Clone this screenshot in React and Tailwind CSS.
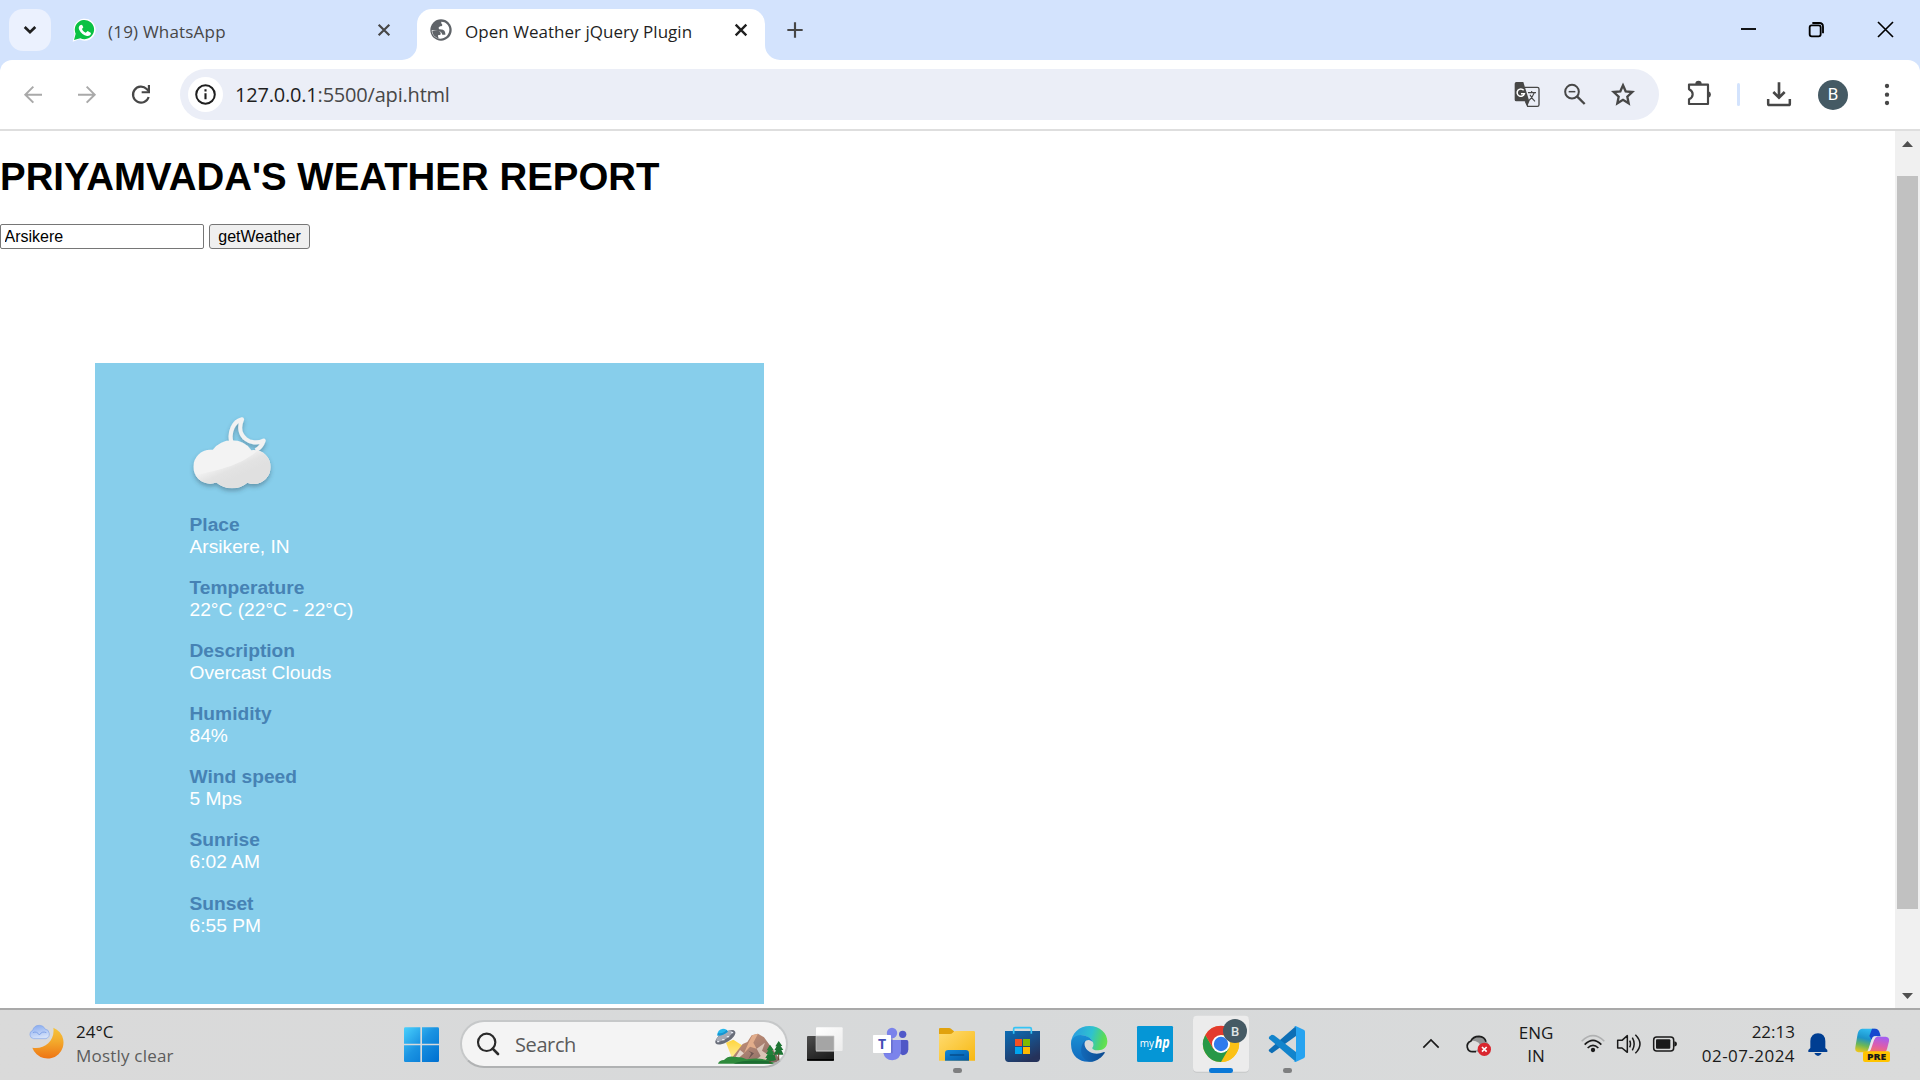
import React from "react";

const UI = "font-['Open_Sans']";

/* Icon whose drawing units are thirds of a pixel */
function Ico({ x, y = 30, w, h = 204, className = "", children }) {
  return (
    <svg
      viewBox={`${x} ${y} ${w} ${h}`}
      width={w / 3}
      height={h / 3}
      fill="none"
      className={`block shrink-0 ${className}`}
    >
      {children}
    </svg>
  );
}

function TabStrip() {
  return (
    <div className="flex h-[60px] shrink-0 items-start bg-[#d3e3fd]">
      <div className="mt-[9px] ml-[9px] flex size-[42px] shrink-0 items-center justify-center rounded-[14px] bg-[#ebf1fe]">
        <svg width="14" height="10" viewBox="0 0 14 10" fill="none">
          <path d="M1.7 2 7 7.2 12.3 2" stroke="#1f1f1f" strokeWidth="2.7" />
        </svg>
      </div>
      <Ico x={213} y={0} w={78} h={180} className="ml-[20px]">
        <path d="M218 125 224 103A33 33 0 1 1 238 118Z" fill="#fff" />
        <path d="M222 120 227 101A29 29 0 1 1 241 115Z" fill="#0ac143" />
        <path
          d="M240 76c-4 3-5 9-2 14 5 10 13 16 23 18 6 1 12-3 12-9l-10-6-6 5c-5-2-9-6-11-11l4-5-4-8z"
          fill="#fff"
        />
      </Ico>
      <div className={`${UI} mt-[19px] ml-[11px] w-[200px] text-[17px] leading-[25px] whitespace-nowrap text-[#474747]`}>
        <span className="tracking-[0.2px]">(19) WhatsApp</span>
      </div>
      <Ico x={1122} y={0} w={60} h={180} className="ml-[66px]">
        <path d="M1136 74 1168 106M1168 74 1136 106" stroke="#474747" strokeWidth="6.5" />
      </Ico>
      <svg width="15" height="60" className="ml-[8px] block shrink-0">
        <path d="M15 45A15 15 0 0 1 0 60H15Z" fill="#fff" />
      </svg>
      <div className="mt-[9px] flex h-[51px] w-[348px] shrink-0 rounded-t-[15px] bg-white">
        <Ico x={1284} y={27} w={78} h={153} className="ml-[11px]">
          <circle cx="1323" cy="90" r="32" fill="#5f6368" />
          <path
            d="M1297 91c9 1 16 2 20 3 7 1 8 5 10 10h9v-5c0-4 4-7 7-7h5c-2 13-13 24-27 24s-26-11-26-25Z"
            fill="#fff"
          />
          <path d="M1324 65c-2 6 3 6 3 10 0 5-11 3-11 9 0 7 13 3 17 8 3 4 2 9 8 9 4-3 8-8 7-14-1-12-11-22-24-22Z" fill="#fff" />
          <path d="M1297 93c13-3 24-2 25 7s-9 2-8 9l2 6c-11-3-19-11-19-22Z" fill="#5f6368" />
        </Ico>
        <div className={`${UI} mt-[10px] ml-[11px] w-[240px] text-[17px] leading-[25px] whitespace-nowrap text-[#1f1f1f]`}>
          <span className="tracking-[0.03px]">Open Weather jQuery Plugin</span>
        </div>
        <Ico x={2193} y={27} w={60} h={153} className="ml-[26px]">
          <path d="M2207 74 2239 106M2239 74 2207 106" stroke="#1f1f1f" strokeWidth="7" />
        </Ico>
      </div>
      <svg width="15" height="60" className="block shrink-0">
        <path d="M0 45A15 15 0 0 0 15 60H0Z" fill="#fff" />
      </svg>
      <Ico x={1155} y={0} w={60} h={180} className="ml-[5px]">
        <path d="M1162 90H1208M1185 67V113" stroke="#474747" strokeWidth="6.5" />
      </Ico>
      <Ico x={780} y={0} w={54} h={180} className="mr-[50px] ml-auto">
        <path d="M783 87H828" stroke="#000" strokeWidth="5.5" />
      </Ico>
      <Ico x={984} y={0} w={54} h={180} className="mr-[51px]">
        <rect x="989" y="76" width="33" height="33" rx="6" stroke="#000" strokeWidth="5.5" />
        <path d="M997 69H1018Q1029 69 1029 80V100" stroke="#000" strokeWidth="5.5" />
      </Ico>
      <Ico x={1191} y={0} w={54} h={180} className="mr-[25px]">
        <path d="M1194 66 1239 111M1239 66 1194 111" stroke="#000" strokeWidth="5" />
      </Ico>
    </div>
  );
}

function Toolbar() {
  return (
    <div className="h-[71px] shrink-0 bg-[#d3e3fd]">
      <div className="flex h-[71px] items-center rounded-t-[12px] border-b-2 border-[#dedede] bg-white">
        <Ico x={66} y={180} w={66} h={207} className="ml-[22px]">
          <path d="M126 284H78M100 260 76 284 100 308" stroke="#a9a9a9" strokeWidth="6" />
        </Ico>
        <Ico x={228} y={180} w={66} h={207} className="ml-[32px]">
          <path d="M234 284H282M260 260 284 284 260 308" stroke="#a9a9a9" strokeWidth="6" />
        </Ico>
        <Ico x={390} y={180} w={66} h={207} className="ml-[32px]">
          <path d="M446 291A24 24 0 1 1 440 267L446 273" stroke="#474747" strokeWidth="6.5" />
          <path d="M450 255V280H425V273.500H443.500V255Z" fill="#474747" />
        </Ico>
        <div className="ml-[28px] flex h-[51px] w-[1479px] shrink-0 items-center rounded-full bg-[#ebeef7]">
          <div className="ml-[8px] flex size-[35px] items-center justify-center rounded-full bg-white">
            <svg width="21" height="21" viewBox="0 0 21 21" fill="none">
              <circle cx="10.500" cy="10.500" r="9.300" stroke="#1f1f1f" strokeWidth="2" />
              <path d="M10.500 9.300V15.300M10.500 5.300V7.600" stroke="#1f1f1f" strokeWidth="2.100" />
            </svg>
          </div>
          <div className={`${UI} ml-[12px] w-[400px] text-[20px] leading-[28px] whitespace-nowrap text-[#474747]`}>
            <span className="tracking-[-0.2px]">
              <span className="text-[#1f1f1f]">127.0.0.1</span>:5500/api.html
            </span>
          </div>
          <Ico x={102} y={207} w={78} h={153} className="ml-auto">
            <path d="M135 262H172Q177 262 177 267V314Q177 319 172 319H143L136 304" stroke="#474747" strokeWidth="4" />
            <path d="M109 246H130L148 304 142 319 136 304H109Q104 304 104 299V251Q104 246 109 246Z" fill="#474747" />
            <path d="M131 271A11 11 0 1 0 133 281H123" stroke="#fff" strokeWidth="4.500" />
            <path d="M144 278H168M155 273V278M163 278Q157 294 146 302M150 284Q156 296 165 304" stroke="#474747" strokeWidth="3.500" />
          </Ico>
          <Ico x={249} y={207} w={72} h={153} className="ml-[23px]">
            <circle cx="276" cy="275" r="20.500" stroke="#474747" strokeWidth="6" />
            <path d="M291 289 314 312" stroke="#474747" strokeWidth="7" />
            <path d="M266 275H286" stroke="#474747" strokeWidth="4.500" />
          </Ico>
          <Ico x={390} y={207} w={78} h={153} className="mr-[23px] ml-[23px]">
            <path
              d="M429 256 437 274 457 276 442 290 446 310 429 299.500 412 310 416 290 401 276 421 274Z"
              stroke="#474747"
              strokeWidth="7"
            />
          </Ico>
        </div>
        <Ico x={618} y={180} w={84} h={207} className="ml-[27px]">
          <path d="M627 254H684V312H627V298Q638 293 638 283Q638 273 627 268Z" stroke="#474747" strokeWidth="6.500" strokeLinejoin="round" />
          <path d="M646 252A9.500 9.500 0 0 1 665 252ZM686 274A10 10 0 0 1 686 293Z" fill="#474747" />
        </Ico>
        <div className="ml-[23px] h-[23px] w-[3px] shrink-0 rounded-full bg-[#d3e3fd]" />
        <Ico x={855} y={180} w={84} h={207} className="ml-[25px]">
          <path d="M897 247V292M880 276 897 293 914 276" stroke="#474747" strokeWidth="8" />
          <path d="M864.500 297V311Q864.500 315 868 315H926Q929.500 315 929.500 311V297" stroke="#474747" strokeWidth="7.500" />
        </Ico>
        <div className="ml-[25px] flex size-[30px] shrink-0 items-center justify-center rounded-full bg-[#455a64] font-[Roboto] text-[17px] leading-none text-white">
          B
        </div>
        <Ico x={1203} y={180} w={36} h={207} className="ml-[33px]">
          <circle cx="1221" cy="258" r="6.500" fill="#474747" />
          <circle cx="1221" cy="284" r="6.500" fill="#474747" />
          <circle cx="1221" cy="309" r="6.500" fill="#474747" />
        </Ico>
      </div>
    </div>
  );
}

const REPORT = [
  ["Place", "Arsikere, IN"],
  ["Temperature", "22°C (22°C - 22°C)"],
  ["Description", "Overcast Clouds"],
  ["Humidity", "84%"],
  ["Wind speed", "5 Mps"],
  ["Sunrise", "6:02 AM"],
  ["Sunset", "6:55 PM"],
];

function CloudMoon() {
  return (
    <Ico x={327} y={186} w={270} h={270} className="overflow-visible">
      <defs>
        <clipPath id="cloud">
          <circle cx="391" cy="350" r="51" />
          <circle cx="456" cy="343" r="72" />
          <circle cx="521" cy="351" r="51" />
        </clipPath>
        <linearGradient id="gloss" gradientUnits="userSpaceOnUse" x1="440" y1="335" x2="462" y2="385">
          <stop offset="0" stopColor="#f1f1f1" />
          <stop offset="0.5" stopColor="#e3e3e3" />
          <stop offset="1" stopColor="#e0e0e0" />
        </linearGradient>
        <filter id="soft" x="-20%" y="-20%" width="140%" height="150%">
          <feDropShadow dx="0" dy="8" stdDeviation="6" floodColor="#345" floodOpacity="0.4" />
        </filter>
      </defs>
      <g filter="url(#soft)">
        <path
          d="M454 275C446 247 461 213 486 208C476 232 481 254 497 267C510 278 533 281 551 272C547 284 540 295 527 301"
          stroke="#f2f2f2"
          strokeWidth="12.500"
          strokeLinejoin="round"
        />
        <g clipPath="url(#cloud)">
          <rect x="330" y="260" width="250" height="170" fill="#f3f3f3" />
          <path d="M335 378C420 360 490 345 540 295L590 290V430H335Z" fill="url(#gloss)" />
        </g>
      </g>
    </Ico>
  );
}

function WeatherPage() {
  return (
    <div className="flex h-[877px] shrink-0 overflow-hidden bg-white">
      <div className="w-[1895px] pt-[24px] font-['Liberation_Sans']">
        <h1 className="text-[38.4px] leading-[44px] font-bold tracking-[0.02px] whitespace-nowrap text-black">PRIYAMVADA'S WEATHER REPORT</h1>
        <div className="mt-[25px] flex gap-[5px] text-[16px] leading-[18px]">
          <input
            className="h-[25px] w-[204px] rounded-[2px] border border-[#767676] bg-white pt-[1px] pr-[3px] pl-[3.500px] text-black"
            defaultValue="Arsikere"
          />
          <button className="h-[25px] w-[101px] rounded-[3px] border border-[#767676] bg-[#efefef] pt-[1px] text-black">
            getWeather
          </button>
        </div>
        <div className="mt-[114px] ml-[95px] h-[641px] w-[669px] bg-[#87ceeb] pt-[49px] pl-[94px]">
          <CloudMoon />
          <dl className="mt-[11.500px] ml-[0.500px] flex flex-col gap-[19.200px] text-[19.200px] leading-[22px]">
            {REPORT.map(([label, value]) => (
              <div key={label}>
                <dt className="font-bold text-[#4682b4]">{label}</dt>
                <dd className="text-white">{value}</dd>
              </div>
            ))}
          </dl>
        </div>
      </div>
      <div className="flex w-[25px] flex-col items-center bg-[#f0f0f0]">
        <svg width="11" height="6" className="mt-[10px] block">
          <path d="M5.500 0 11 6H0Z" fill="#505050" />
        </svg>
        <div className="mt-[29px] h-[733px] w-[21px] bg-[#c1c1c1]" />
        <svg width="11" height="6" className="mt-[84px] block">
          <path d="M5.500 6 11 0H0Z" fill="#505050" />
        </svg>
      </div>
    </div>
  );
}

function SearchBox() {
  return (
    <div className="ml-[16px] flex h-[48px] w-[328px] shrink-0 items-center overflow-hidden rounded-full border-2 border-[#c6c8c9] border-b-[#b0b2b3] bg-[#f4f4f4]">
      <Ico x={102} y={66} w={84} h={132} className="ml-[12px]">
        <circle cx="140" cy="127" r="26" stroke="#2a2a2a" strokeWidth="6.500" />
        <path d="M158 146 174 162" stroke="#2a2a2a" strokeWidth="8" strokeLinecap="round" />
      </Ico>
      <div className={`${UI} ml-[13px] w-[100px] pt-[1px] text-[20px] leading-[28px] text-[#5b5b5b]`}>
        <span className="tracking-[-0.4px]">Search</span>
      </div>
      <Ico x={816} y={66} w={222} h={132} className="mr-0 ml-auto">
        <defs>
          <linearGradient id="beam" x1="0" y1="0" x2="0" y2="1">
            <stop stopColor="#ffd53e" />
            <stop offset="1" stopColor="#fff0a6" />
          </linearGradient>
          <linearGradient id="rock" x1="0" y1="0" x2="1" y2="1">
            <stop stopColor="#cf9474" />
            <stop offset="0.5" stopColor="#a98071" />
            <stop offset="1" stopColor="#7d6661" />
          </linearGradient>
        </defs>
        <path d="M858 128 880 119 925 148 880 184Z" fill="url(#beam)" />
        <path d="M866 186 908 132 922 126 935 106 954 101 972 112 1000 150 1026 188Z" fill="url(#rock)" />
        <path d="M954 101 940 128 950 146 930 140 912 160 925 130 937 106Z" fill="#e2ad8b" />
        <path d="M950 146 975 128 966 152 990 168 972 186H940L962 168Z" fill="#d9c3b6" />
        <path d="M900 150 912 160 896 174 906 180 880 182Z" fill="#e6d6cb" />
        <path d="M925 152 942 160 925 178 934 160Z" fill="#6d5551" />
        <path d="M834 191Q838 180 852 180Q866 166 884 171Q905 170 920 178Q960 172 985 182L1010 191Z" fill="#2f8a3c" />
        <path d="M880 191Q920 176 985 184L1000 191Z" fill="#1c6d31" />
        <path d="M990 134 1001 150H996L1003 161H998L1004 174H976L983 162H978L985 151H980Z" fill="#23803a" />
        <path d="M1016 123 1027 138H1022L1030 150H1024L1031 164H1001L1008 151H1003L1010 139H1006Z" fill="#1d7433" />
        <path d="M990 170V190M1016 160V184" stroke="#69442c" strokeWidth="3" />
        <path d="M985 165H1004L1008 180Q995 186 978 181Z" fill="#1f7735" />
        <path d="M832 106Q832 88 849 86Q862 87 864 96Z" fill="#27b8ec" />
        <ellipse cx="856" cy="112" rx="34" ry="15" transform="rotate(-31 856 112)" fill="#686d79" />
        <ellipse cx="853" cy="108" rx="28" ry="10" transform="rotate(-31 853 108)" fill="#a6aab5" />
        <path d="M832 107Q847 109 864 95L860 89Q850 102 834 99Z" fill="#1597d3" />
        <path d="M833 125H836M848 119H852M862 110H866M875 98H878" stroke="#e9edf5" strokeWidth="4" strokeLinecap="round" />
      </Ico>
    </div>
  );
}

function Taskbar() {
  return (
    <div className={`${UI} flex h-[72px] shrink-0 border-t-2 border-[#a9a9a9] bg-linear-to-r from-[#dadada] via-[#d7d9da] to-[#dadbdb] text-[#1a1a1a]`}>
      <div className="flex h-[68px] w-full items-center">
        <Ico x={81} w={114} className="ml-[27px]">
          <defs>
            <linearGradient id="moon" x1="0" y1="0" x2="0" y2="1">
              <stop stopColor="#f5c43c" />
              <stop offset="0.45" stopColor="#f3a92c" />
              <stop offset="1" stopColor="#ee7414" />
            </linearGradient>
            <linearGradient id="cl" x1="0" y1="0" x2="0.3" y2="1">
              <stop stopColor="#85a8ee" />
              <stop offset="1" stopColor="#d3e1fa" />
            </linearGradient>
          </defs>
          <path d="M160 83A48 48 0 1 1 97 143C132 150 166 122 160 83Z" fill="url(#moon)" />
          <path d="M101 116A13 13 0 0 1 98 91Q102 76 118 76Q131 76 135 87A15 15 0 0 1 138 116Z" fill="url(#cl)" stroke="#85a6e8" strokeWidth="2" />
          <path d="M99 98Q110 92 118 105Q126 92 139 98" stroke="#779be5" strokeWidth="2.500" />
        </Ico>
        <div className="ml-[11px] w-[180px] text-[17px] leading-[24px] whitespace-nowrap">
          <div className="tracking-[0px]">24°C</div>
          <div className="tracking-[0.2px] text-[#5c5c5c]">Mostly clear</div>
        </div>

        <Ico x={1200} w={132} className="ml-[144px]">
          <defs>
            <linearGradient id="win" gradientUnits="userSpaceOnUse" x1="1212" y1="82" x2="1310" y2="180">
              <stop stopColor="#49d0fc" />
              <stop offset="0.5" stopColor="#1a93e2" />
              <stop offset="1" stopColor="#0273d2" />
            </linearGradient>
          </defs>
          <path
            d="M1216 82H1261V131H1212V86Q1212 82 1216 82ZM1266 82H1313Q1317 82 1317 86V131H1266ZM1212 136H1261V186H1216Q1212 186 1212 182ZM1266 136H1317V182Q1317 186 1313 186H1266Z"
            fill="url(#win)"
          />
        </Ico>

        <SearchBox />

        <Ico x={1092} w={126} className="ml-[16px]">
          <defs>
            <linearGradient id="tvd" x1="0" y1="0" x2="0.5" y2="1">
              <stop stopColor="#4d4d4d" />
              <stop offset="1" stopColor="#1f1f1f" />
            </linearGradient>
            <linearGradient id="tvl" x1="0" y1="0" x2="1" y2="1">
              <stop stopColor="#fff" />
              <stop offset="1" stopColor="#ececec" />
            </linearGradient>
          </defs>
          <rect x="1101" y="108" width="81" height="75" rx="3" fill="url(#tvd)" />
          <path d="M1101 179H1182" stroke="#000" strokeWidth="4" />
          <rect x="1128" y="82" width="80" height="71" rx="3" fill="url(#tvl)" />
          <rect x="1128" y="108" width="54" height="47" fill="#a5a5a5" />
          <path d="M1128 108H1182V152H1128Z" stroke="#c8c8c8" strokeWidth="2" />
        </Ico>

        <Ico x={90} w={126} className="ml-[24px]">
          <circle cx="188" cy="103" r="11" fill="#5059c9" />
          <path d="M178 120H200Q205 120 205 125V148Q204 165 188 166L178 160Z" fill="#4f57c6" />
          <circle cx="156" cy="99" r="15.500" fill="#7b83eb" />
          <path d="M132 120H183V153Q181 180 157 181Q134 180 130 158Z" fill="#7b83eb" />
          <path d="M153 115H158V160H130V156H153Z" fill="#5b62c0" opacity="0.6" />
          <rect x="99" y="105" width="54" height="54" rx="2" fill="#fff" />
          <text x="126" y="147" textAnchor="middle" fontFamily="Open Sans" fontWeight="700" fontSize="42" fill="#444fb5">T</text>
        </Ico>

        <Ico x={288} w={126} className="ml-[24px]">
          <defs>
            <linearGradient id="fold" x1="0" y1="0" x2="1" y2="1">
              <stop stopColor="#ffdc72" />
              <stop offset="1" stopColor="#f7b812" />
            </linearGradient>
            <linearGradient id="blue" x1="0" y1="0" x2="1" y2="1">
              <stop stopColor="#1288da" />
              <stop offset="1" stopColor="#0359a8" />
            </linearGradient>
          </defs>
          <path d="M300 84H327Q331 84 333 86L342 94V120H297V88Q297 84 300 84Z" fill="#e1a20d" />
          <path d="M297 102H330Q335 102 338 98L343 94Q345 93 348 93H401Q405 93 405 97V182H297Z" fill="url(#fold)" />
          <path d="M315 182V160Q315 150 325 150H377Q387 150 387 160V182Z" fill="url(#blue)" />
          <path d="M331 165H371" stroke="#064d8d" strokeWidth="4" strokeLinecap="round" />
          <rect x="339" y="204" width="27" height="15" rx="7" fill="#7e7f80" />
        </Ico>

        <Ico x={486} w={126} className="ml-[24px]">
          <defs>
            <linearGradient id="bag" x1="0" y1="0" x2="0.6" y2="1">
              <stop stopColor="#0a6cb4" />
              <stop offset="0.5" stopColor="#18508a" />
              <stop offset="1" stopColor="#25325a" />
            </linearGradient>
          </defs>
          <path d="M495 93H600V175Q600 186 589 186H506Q495 186 495 175Z" fill="url(#bag)" />
          <path d="M521 101V86Q521 83 525 83H570Q574 83 574 87V101" stroke="#35c4f5" strokeWidth="5" />
          <path d="M525 117H546V138H525Z" fill="#f25022" />
          <path d="M549 117H570V138H549Z" fill="#7fba00" />
          <path d="M525 141H546V162H525Z" fill="#00a4ef" />
          <path d="M549 141H570V162H549Z" fill="#ffb900" />
        </Ico>

        <Ico x={684} w={126} className="ml-[24px]">
          <defs>
            <linearGradient id="e1" gradientUnits="userSpaceOnUse" x1="700" y1="100" x2="802" y2="130">
              <stop stopColor="#2a9fe0" />
              <stop offset="0.5" stopColor="#2fc2cf" />
              <stop offset="0.85" stopColor="#56da5b" />
              <stop offset="1" stopColor="#6be34e" />
            </linearGradient>
            <linearGradient id="e2" x1="0" y1="0" x2="0" y2="1">
              <stop stopColor="#1a8fd4" />
              <stop offset="1" stopColor="#1169bd" />
            </linearGradient>
            <linearGradient id="e3" x1="0" y1="0" x2="1" y2="0">
              <stop stopColor="#1369b8" />
              <stop offset="1" stopColor="#0c4a90" />
            </linearGradient>
          </defs>
          <path d="M693 130C694 100 718 78 748 78C780 78 802 100 802 124C802 142 790 151 775 151C762 151 756 147 757 143C762 138 761 129 757 123C742 100 704 100 693 130Z" fill="url(#e1)" />
          <path d="M693 132C693 116 706 105 721 105C739 105 754 114 759 127C753 119 740 116 733 128C726 138 728 158 742 170C750 178 762 181 769 179C740 194 693 182 693 132Z" fill="url(#e2)" />
          <path d="M735 122C722 132 718 160 732 175C738 182 748 187 757 185C772 182 786 172 794 159C795 156 793 155 790 157C770 166 744 160 736 142C733 135 733 128 735 122Z" fill="url(#e3)" />
        </Ico>

        <Ico x={882} w={126} className="ml-[24px]">
          <rect x="891" y="78" width="108" height="108" rx="4" fill="#0596d6" />
          <text x="899" y="142" fontFamily="Open Sans" fontSize="31" fill="#fff" textLength="43" lengthAdjust="spacingAndGlyphs">my</text>
          <text x="944" y="144" fontFamily="Open Sans" fontStyle="italic" fontWeight="700" fontSize="46" fill="#fff" textLength="45" lengthAdjust="spacingAndGlyphs">hp</text>
        </Ico>

        <Ico x={1056} w={174} className="ml-[16px]">
          <rect x="1059" y="49" width="168" height="169" rx="12" fill="#c5c7c8" />
          <rect x="1059" y="47" width="168" height="168" rx="12" fill="#ececec" />
          <circle cx="1143" cy="132" r="54" fill="#fbc116" />
          <path d="M1143 132 1096 105A54 54 0 0 1 1190 105Z" fill="#e33b2e" />
          <path d="M1143 105H1190A54 54 0 0 1 1143 186L1166 146Z" fill="#fbc116" />
          <path d="M1096 105A54 54 0 0 0 1143 186L1166 146 1120 146Z" fill="#279847" />
          <path d="M1096 105 1120 146 1143 132V105Z" fill="#e33b2e" />
          <circle cx="1143" cy="132" r="27" fill="#fff" />
          <circle cx="1143" cy="132" r="21.500" fill="#2f7bed" />
          <circle cx="1185" cy="93" r="36" fill="#455a64" />
          <text x="1185" y="107" textAnchor="middle" fontFamily="Roboto" fontWeight="500" fontSize="39" fill="#dfe4e6">B</text>
          <rect x="1107" y="204" width="72" height="15" rx="7" fill="#0a78d7" />
        </Ico>

        <Ico x={1278} w={126} className="ml-[16px]">
          <path d="M1368 78 1286 150Q1285 155 1296 160L1368 108Z" fill="#0d6eb5" />
          <path d="M1368 186 1287 116Q1284 110 1296 104Q1299 104 1302 106L1368 156Z" fill="#1284cc" />
          <path d="M1367 78 1391 89Q1395 91 1395 95V169Q1395 173 1391 175L1367 186Q1363 186 1360 183Q1368 186 1368 178V86Q1368 78 1360 81Z" fill="#27a3f0" />
          <rect x="1329" y="204" width="27" height="15" rx="7" fill="#7e7f80" />
        </Ico>

        <Ico x={60} w={66} className="ml-[112px]">
          <path d="M70 143 93 120 116 143" stroke="#1a1a1a" strokeWidth="5" />
        </Ico>
        <Ico x={192} w={90} className="ml-[22px]">
          <path d="M216 155A17 17 0 0 1 212 124Q219 109 237 109Q252 110 257 124Q266 128 268 140L262 155Z" fill="#929394" />
          <path d="M212 123Q234 118 246 142L222 155Q204 153 204 139Z" fill="#dedfdf" />
          <path d="M228 155H218A16 16 0 0 1 212 124Q219 109 237 109Q254 110 258 125" stroke="#1d1d1d" strokeWidth="5" />
          <circle cx="253" cy="148" r="20" fill="#d9262f" />
          <path d="M246 141 260 155M260 141 246 155" stroke="#fff" strokeWidth="5" />
        </Ico>
        <div className="ml-[18px] w-[48px] text-center text-[17px] leading-[23px]">
          <div className="tracking-[0px]">ENG</div>
          <div>IN</div>
        </div>
        <Ico x={540} w={78} className="ml-[20px]">
          <path d="M545 124Q579 90 613 124" stroke="#b0b1b2" strokeWidth="4.500" />
          <path d="M554 134Q579 108 604 134M563 144Q579 128 595 144" stroke="#1a1a1a" strokeWidth="5" />
          <circle cx="579" cy="150" r="6.500" fill="#1a1a1a" />
        </Ico>
        <Ico x={648} w={78} className="ml-[10px]">
          <path d="M653 121H666L682 107V157L666 144H653Z" stroke="#1a1a1a" strokeWidth="4.500" strokeLinejoin="round" />
          <path d="M689 122Q694 132 689 142M697 113Q708 132 697 151M706 104Q734 132 706 160" stroke="#1a1a1a" strokeWidth="4.500" />
        </Ico>
        <Ico x={756} w={78} className="ml-[10px]">
          <rect x="761" y="111" width="60" height="42" rx="9" stroke="#1a1a1a" strokeWidth="4.500" />
          <rect x="768" y="118" width="43" height="28" rx="3" fill="#1a1a1a" />
          <path d="M823 124Q831 125 831 132Q831 139 823 140Z" fill="#1a1a1a" />
        </Ico>
        <div className="ml-[17px] w-[100px] text-right text-[17px] leading-[24px] whitespace-nowrap">
          <div className="tracking-[0px]">22:13</div>
          <div className="tracking-[0.45px]">02-07-2024</div>
        </div>
        <Ico x={1218} w={72} className="ml-[11px]">
          <path d="M1231 144V123Q1233 100 1254 100Q1275 101 1276 123V144L1282 150V156H1225V150Z" fill="#003e92" />
          <path d="M1243 159H1265Q1261 168 1254 168Q1247 168 1243 159Z" fill="#003e92" />
        </Ico>
        <Ico x={1359} w={117} className="ml-[23px]">
          <defs>
            <linearGradient id="c1" x1="0.5" y1="0" x2="0.3" y2="1">
              <stop stopColor="#2fb9ef" />
              <stop offset="0.4" stopColor="#1c93c9" />
              <stop offset="0.7" stopColor="#6cb757" />
              <stop offset="1" stopColor="#eec71b" />
            </linearGradient>
            <linearGradient id="c2" x1="0.6" y1="0" x2="0.3" y2="1">
              <stop stopColor="#a45ef0" />
              <stop offset="0.5" stopColor="#dc5cae" />
              <stop offset="1" stopColor="#fb7a52" />
            </linearGradient>
          </defs>
          <path d="M1386 86H1425L1405 148Q1403 157 1393 157H1376Q1363 156 1366 142L1373 101Q1376 87 1386 86Z" fill="url(#c1)" />
          <path d="M1416 86H1428Q1436 87 1439 98L1442 109H1428Q1419 110 1416 120L1408 108Z" fill="#1748cf" />
          <path d="M1428 110H1457Q1469 111 1467 124L1461 147Q1457 160 1444 160H1394Q1407 157 1411 144L1417 121Q1420 110 1428 110Z" fill="url(#c2)" />
          <path d="M1422 109H1433Q1425 112 1422 121L1412 150Q1408 158 1397 159Q1404 155 1407 146L1415 119Q1417 110 1422 109Z" fill="#e9e6ee" />
          <rect x="1389" y="154" width="81" height="32" rx="6" fill="#ffc400" />
          <text x="1401" y="180" fontFamily="Open Sans" fontWeight="800" fontSize="27" fill="#1a1a1a" textLength="58" lengthAdjust="spacingAndGlyphs">PRE</text>
        </Ico>
      </div>
    </div>
  );
}

export default function App() {
  return (
    <div className="flex h-[1080px] w-[1920px] flex-col overflow-hidden bg-white">
      <TabStrip />
      <Toolbar />
      <WeatherPage />
      <Taskbar />
    </div>
  );
}
